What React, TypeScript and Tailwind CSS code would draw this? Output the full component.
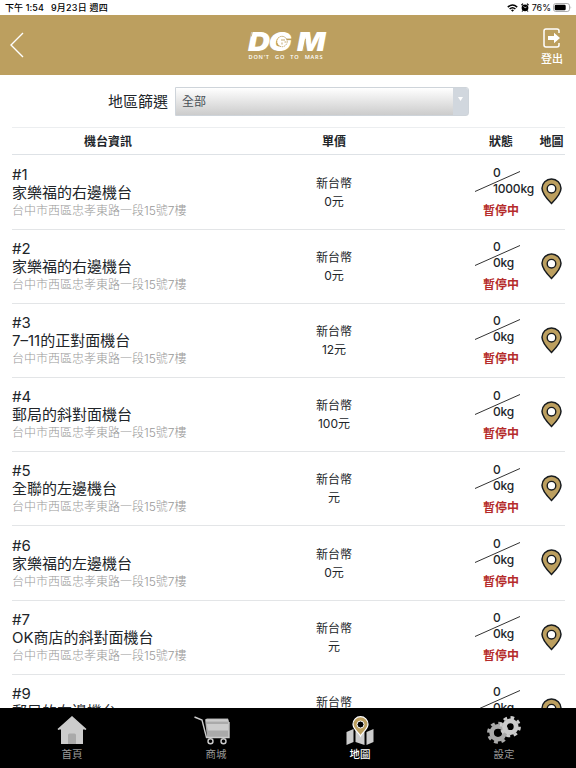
import { useState } from "react";

const FONT = "font-['Inter','Noto_Sans_CJK_TC',sans-serif]";
const ADDRESS = "台中市西區忠孝東路一段15號7樓";

const machines = [
    { id: 1, name: "家樂福的右邊機台", price: "0元", total: "1000kg" },
    { id: 2, name: "家樂福的右邊機台", price: "0元", total: "0kg" },
    { id: 3, name: "7–11的正對面機台", price: "12元", total: "0kg" },
    { id: 4, name: "郵局的斜對面機台", price: "100元", total: "0kg" },
    { id: 5, name: "全聯的左邊機台", price: "元", total: "0kg" },
    { id: 6, name: "家樂福的左邊機台", price: "0元", total: "0kg" },
    { id: 7, name: "OK商店的斜對面機台", price: "元", total: "0kg" },
    { id: 9, name: "郵局的右邊機台", price: "0元", total: "0kg" },
];

const App = () => {
    const [tab, setTab] = useState("map");

    return (
        <div
            className={`flex flex-col w-[576px] h-[768px] overflow-hidden bg-white text-[#212529] ${FONT}`}
        >
            <StatusBar />
            <Header />
            <main className="flex-1 min-h-0 overflow-hidden pl-3 pr-[11px]">
                <Filter />
                <div className="grid grid-cols-[192px_260px_74px_27px] h-7 items-center pt-px border-t border-t-[#eceef0] border-b border-b-[#dee2e6] text-center text-[12px] leading-none font-bold whitespace-nowrap">
                    <span>機台資訊</span>
                    <span>單價</span>
                    <span>狀態</span>
                    <span className="-mx-1">地圖</span>
                </div>
                {machines.map((machine) => (
                    <Machine key={machine.id} {...machine} />
                ))}
            </main>
            <nav className="grid grid-cols-4 h-[60px] shrink-0 bg-black">
                <Tab label="首頁" active={tab == "home"} onClick={() => setTab("home")}>
                    <HomeIcon />
                </Tab>
                <Tab label="商城" active={tab == "shop"} onClick={() => setTab("shop")}>
                    <CartIcon />
                </Tab>
                <Tab label="地圖" active={tab == "map"} onClick={() => setTab("map")}>
                    <MapIcon />
                </Tab>
                <Tab label="設定" active={tab == "settings"} onClick={() => setTab("settings")}>
                    <GearsIcon />
                </Tab>
            </nav>
        </div>
    );
};

const StatusBar = () => (
    <div className="flex items-center h-[15px] shrink-0 pl-[5px] pr-1 text-[9px] leading-none font-medium text-black whitespace-nowrap">
        <span className="w-[46px] tracking-[0.1px]">下午 1:54</span>
        <span className="tracking-[0.2px]">9月23日 週四</span>
        <svg className="ml-auto w-[11px] h-[8px]" viewBox="0 0 11 8" fill="none" stroke="#000">
            <path d="M.8 3.1Q5.5-1.2 10.2 3.1" strokeWidth="1.5" />
            <path d="M2.6 5Q5.5 2.4 8.4 5" strokeWidth="1.5" />
            <path d="M4 6.2Q5.5 4.9 7 6.2L5.5 7.8Z" fill="#000" stroke="none" />
        </svg>
        <svg className="ml-[3px] w-[8px] h-[9px]" viewBox="0 0 8 9" fill="none">
            <circle cx="4" cy="4.8" r="3.4" fill="#000" />
            <path d="M.4 2.1 2 .6M7.6 2.1 6 .6M1.8 7.5 1 8.5M6.2 7.5 7 8.5" stroke="#000" strokeWidth="1.2" />
            <path d="M2.6 3.3 4 4.9 5.6 4" stroke="#fff" strokeWidth=".7" />
        </svg>
        <span className="ml-[3px] font-normal">76%</span>
        <svg className="ml-[2px] w-[19px] h-[9px]" viewBox="0 0 19 9" fill="none">
            <rect x=".5" y=".5" width="16" height="8" rx="2.3" stroke="#999" strokeWidth=".8" />
            <rect x="1.7" y="1.7" width="11" height="5.6" rx="1.2" fill="#000" />
            <path d="M17.6 3q1.3 1.5 0 3z" fill="#999" />
        </svg>
    </div>
);

const Header = () => (
    <header className="grid grid-cols-[1fr_auto_1fr] items-center h-[60px] shrink-0 bg-[#bc9f5f] text-white">
        <button className="pl-[10px]">
            <svg className="w-[14px] h-[26px]" viewBox="0 0 14 26" fill="none" stroke="#fff" strokeWidth="1.4">
                <path d="M13 1 1 13 13 25" />
            </svg>
        </button>
        <svg className="w-20 h-[30px] overflow-visible" viewBox="0 0 80 30" fill="#fff">
            <g
                className="font-['Inter',sans-serif] font-black italic"
                fontSize="26"
            >
                <text x="0" y="20.6" textLength="22" lengthAdjust="spacingAndGlyphs">D</text>
                <text x="20.5" y="20.6" textLength="23" lengthAdjust="spacingAndGlyphs">G</text>
                <text x="49" y="20.6" textLength="28.5" lengthAdjust="spacingAndGlyphs">M</text>
            </g>
            <circle cx="34" cy="11.5" r="5" fill="#fff" />
            <circle cx="34" cy="11.5" r="5.2" fill="none" stroke="#bc9f5f" strokeWidth=".9" strokeDasharray="1.4 .8" />
            <path d="M33 10H37M34 12.5V14.5M36.5 12H38" stroke="#bc9f5f" strokeWidth=".9" />
            <path d="M4.5 1 3.2 6.5M57.6 9 54.8 21" stroke="#bc9f5f" strokeWidth=".8" />
            <text
                className="font-['Open_Sans',sans-serif] font-semibold"
                x="0.5"
                y="28.6"
                fontSize="5.6"
                wordSpacing="3"
                textLength="74"
            >
                DON'T GO TO MARS
            </text>
        </svg>
        <button className="justify-self-end flex flex-col items-center w-[22px] mr-[13px] gap-[5px] pt-[3px]">
            <svg className="w-[18px] h-5" viewBox="0 0 18 20" fill="none" stroke="#fff" strokeWidth="1.5">
                <path d="M16 5V3Q16 1 14 1H3Q1 1 1 3V17Q1 19 3 19H14Q16 19 16 17V15" />
                <path d="M5 8h6V4.8L17 10 11 15.2V12H5Z" fill="#fff" stroke="none" />
            </svg>
            <span className="text-[11px] leading-[12px] font-medium whitespace-nowrap">登出</span>
        </button>
    </header>
);

const Filter = () => (
    <div className="flex items-center h-[52.4px] pl-24">
        <span className="w-[67px] text-[15px] leading-none whitespace-nowrap">地區篩選</span>
        <button className="flex w-[294px] h-[29px] rounded-r-[3px] border border-[#ced4da] bg-linear-to-b from-white to-[#cccccc] overflow-hidden">
            <span className="flex items-center flex-1 h-full pl-1.5 pt-0.5 text-[12px] leading-none text-[#495057]">全部</span>
            <span className="grid place-items-center w-[15px] h-full bg-[#d1d7de]">
                <svg className="w-[5px] h-[4px] -mt-1" viewBox="0 0 5 4" fill="#fff">
                    <path d="M0 0H5L2.5 4Z" />
                </svg>
            </span>
        </button>
    </div>
);

type MachineProps = { id: number; name: string; price: string; total: string };

const Machine = ({ id, name, price, total }: MachineProps) => (
    <div className="grid grid-cols-[192px_260px_74px_27px] items-center h-[74.2px] border-b border-[#e3e5e7] whitespace-nowrap">
        <div className="pt-[1.5px]">
            <p className="text-[15px] leading-[18px]">#{id}</p>
            <p className="text-[15px] leading-[18px]">{name}</p>
            <p className="text-[12px] leading-[18px] font-light text-[#999]">{ADDRESS}</p>
        </div>
        <div className="pt-[1.5px] text-center text-[12px] leading-[18px]">
            <p>新台幣</p>
            <p>{price}</p>
        </div>
        <div className="relative pl-[19px] text-[12px]">
            <p className="pl-[10px] leading-4 font-medium">0</p>
            <p className="pl-[10px] leading-4 font-medium tracking-[-0.2px]">{total}</p>
            <p className="mt-[6px] leading-4 font-bold text-[#b52b2b]">暫停中</p>
            <svg className="absolute left-[11px] top-[6px] w-[45px] h-[21px]" viewBox="0 0 45 21" stroke="#333" strokeWidth="1">
                <path d="M0 20.5 45 .5" />
            </svg>
        </div>
        <Pin />
    </div>
);

const Pin = () => (
    <svg className="w-[21px] h-[27px] ml-[3px]" viewBox="0 0 21 27">
        <path
            d="M10.5 25.5C6.5 21.5 1 16 1 10.3A9.5 9.3 0 0 1 20 10.3C20 16 14.5 21.5 10.5 25.5Z"
            fill="#bc9f5f"
            stroke="#171b1f"
            strokeWidth="1.5"
        />
        <circle cx="10.5" cy="10.7" r="4.3" fill="#fff" stroke="#171b1f" strokeWidth="1.4" />
    </svg>
);

type TabProps = {
    label: string;
    active: boolean;
    onClick: () => void;
    children: React.ReactNode;
};

const Tab = ({ label, active, onClick, children }: TabProps) => (
    <button className="flex flex-col items-center pt-2" onClick={onClick}>
        {children}
        <span
            className={`mt-1 text-[10.5px] leading-[12px] ${
                active ? "text-white font-medium" : "text-[#999]"
            }`}
        >
            {label}
        </span>
    </button>
);

const HomeIcon = () => (
    <svg className="w-[30px] h-[29px]" viewBox="0 0 30 29">
        <path d="M4 13 15 3 26 13V28H4Z" fill="#ccc" />
        <path d="M1 13.5 15 1 29 13.5" fill="#ccc" stroke="#ccc" strokeWidth="1.5" />
        <path d="M11 28V19Q11 17.5 12.5 17.5H17.5Q19 17.5 19 19V28Z" fill="#aaa" />
    </svg>
);

const CartIcon = () => (
    <svg className="w-9 h-[29px] -ml-[9px]" viewBox="0 0 36 29" fill="none">
        <path d="M11 3.5 13 2.5H34L35 5V21H13Z" fill="#aaa" />
        <path d="M12 3.2H34V5.6H12Z" fill="#ccc" />
        <path d="M12.5 8H34V14.5H14Z" fill="#ccc" />
        <path d="M.5 1 8 4 12.5 21.5H35V6" stroke="#ccc" strokeWidth="1.4" />
        <circle cx="16.5" cy="25.3" r="2.5" fill="#000" stroke="#ccc" strokeWidth="1.4" />
        <circle cx="29.5" cy="25.3" r="2.5" fill="#000" stroke="#ccc" strokeWidth="1.4" />
    </svg>
);

const MapIcon = () => (
    <svg className="w-7 h-[29px]" viewBox="0 0 28 29">
        <path d="M.5 16 7.5 13V26L.5 29ZM9.5 13 18.5 16V29L9.5 26ZM20.5 16 27.5 13V26L20.5 29Z" fill="#ccc" />
        <path
            d="M14.5 20C13 16.5 7 13.5 7 8.3A7.5 7.6 0 0 1 22 8.3C22 13.5 16 16.5 14.5 20Z"
            fill="#bc9f5f"
            stroke="#fff"
            strokeWidth="1.2"
        />
        <circle cx="14.5" cy="8.5" r="3.5" fill="#000" stroke="#fff" />
    </svg>
);

const GearsIcon = () => (
    <svg className="w-[34px] h-[29px]" viewBox="0 0 34 29" fill="none">
        <g stroke="#aaa">
            <circle cx="11" cy="16.8" r="6.4" strokeWidth="4.6" />
            <circle cx="11" cy="16.8" r="9.6" strokeWidth="2.8" strokeDasharray="3.9 3.64" />
        </g>
        <g stroke="#ccc">
            <circle cx="23.3" cy="10.7" r="5.8" strokeWidth="4.8" />
            <circle cx="23.3" cy="10.7" r="9.2" strokeWidth="2.8" strokeDasharray="3.7 3.52" />
        </g>
    </svg>
);

export default App;
